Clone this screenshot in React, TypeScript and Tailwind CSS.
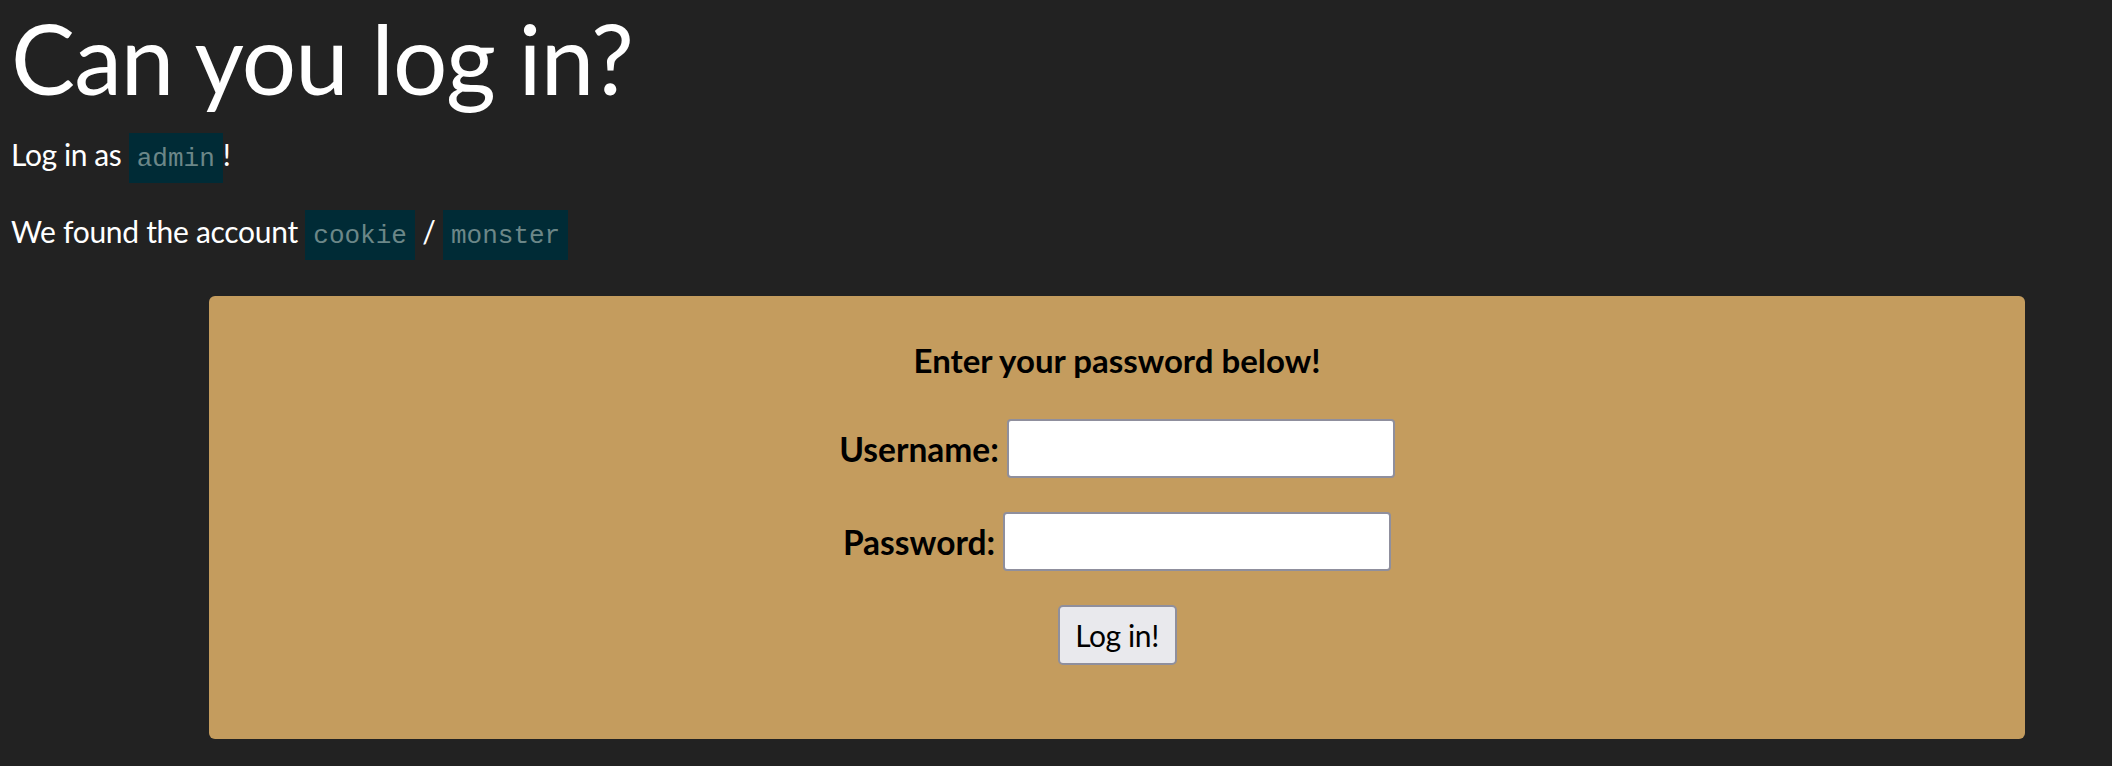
import type { ReactNode } from "react";

const Code = ({ children }: { children: ReactNode }) => (
    <code className="inline-block bg-[#002b36] text-[#6c8788] px-[8px] pt-[11px] pb-[9px] text-[26px] leading-[30px] tracking-normal font-['Liberation_Mono',monospace]">
        {children}
    </code>
);

const Field = ({ label, type, offset }: { label: string; type: string; offset: string }) => (
    <div className={`flex items-center ${offset}`}>
        <label className="text-[33.5px] font-bold text-black leading-[38px]">{label}</label>
        <input
            type={type}
            className="ml-[8px] w-[388px] h-[59px] bg-white border-2 border-[#8f8f9d] rounded-[4px] outline-none"
        />
    </div>
);

export default function App() {
    return (
        <div className="min-h-[766px] bg-[#222222] text-white font-['Lato','Noto_Sans',sans-serif] pb-[27px]">
            <div className="pl-[11px]">
                <h1 className="text-[96px] leading-[115px] font-normal tracking-[-1px]">Can you log in?</h1>
                <p className="mt-[18px] text-[30px] leading-[38px] tracking-[-0.4px]">
                    Log in as <Code>admin</Code>!
                </p>
                <p className="mt-[27px] text-[30px] leading-[38px] tracking-[-0.3px]">
                    We found the account <Code>cookie</Code> / <Code>monster</Code>
                </p>
            </div>

            <div className="ml-[209px] mt-[36px] w-[1816px] h-[443px] bg-[#c49c5e] rounded-[6px] flex flex-col items-center pt-[45px] text-black">
                <h3 className="text-[33px] font-bold leading-[38px]">Enter your password below!</h3>
                <Field label="Username:" type="text" offset="mt-[40px]" />
                <Field label="Password:" type="password" offset="mt-[34px]" />
                <button className="mt-[34px] w-[119px] h-[60px] bg-[#e9e9ed] border-2 border-[#8f8f9d] rounded-[5px] text-[30px] leading-[38px] tracking-[-0.4px]">
                    Log in!
                </button>
            </div>
        </div>
    );
}
